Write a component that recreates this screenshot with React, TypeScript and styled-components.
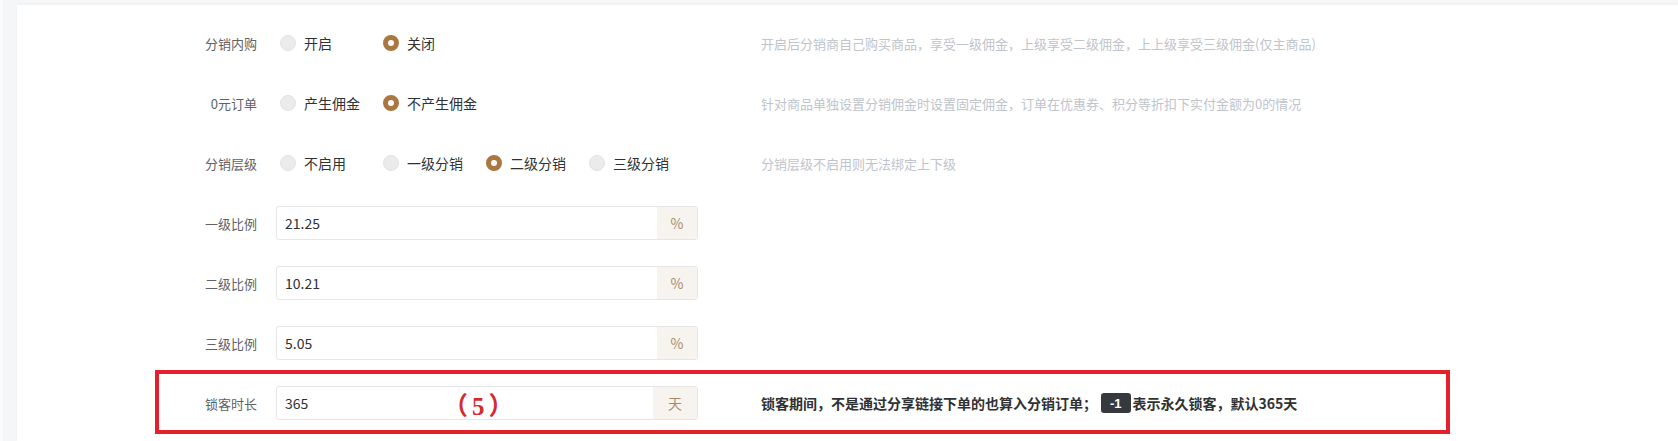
import styled, { createGlobalStyle } from "styled-components";

const GlobalStyle = createGlobalStyle`
  html, body {
    margin: 0;
    padding: 0;
    background: #ffffff;
  }
  body {
    font-family: "Noto Sans CJK SC", "Liberation Sans", sans-serif;
    -webkit-font-smoothing: antialiased;
  }
`;

type RadioOption = { label: string; checked?: boolean };

type FieldRow =
  | { kind: "radio"; label: string; options: RadioOption[]; tip: string }
  | { kind: "input"; label: string; value: string; unit: string };

const rows: FieldRow[] = [
  {
    kind: "radio",
    label: "分销内购",
    options: [{ label: "开启" }, { label: "关闭", checked: true }],
    tip: "开启后分销商自己购买商品，享受一级佣金，上级享受二级佣金，上上级享受三级佣金(仅主商品)",
  },
  {
    kind: "radio",
    label: "0元订单",
    options: [{ label: "产生佣金" }, { label: "不产生佣金", checked: true }],
    tip: "针对商品单独设置分销佣金时设置固定佣金，订单在优惠券、积分等折扣下实付金额为0的情况",
  },
  {
    kind: "radio",
    label: "分销层级",
    options: [
      { label: "不启用" },
      { label: "一级分销" },
      { label: "二级分销", checked: true },
      { label: "三级分销" },
    ],
    tip: "分销层级不启用则无法绑定上下级",
  },
  { kind: "input", label: "一级比例", value: "21.25", unit: "%" },
  { kind: "input", label: "二级比例", value: "10.21", unit: "%" },
  { kind: "input", label: "三级比例", value: "5.05", unit: "%" },
];

export default function App() {
  return (
    <>
      <GlobalStyle />
      <Page>
        <Card>
          {rows.map((row) => (
            <Row key={row.label}>
              <Label>{row.label}</Label>
              <Control>
                {row.kind === "radio" ? (
                  <RadioGroup>
                    {row.options.map((opt) => (
                      <RadioItem key={opt.label}>
                        <RadioDot $checked={!!opt.checked} />
                        <RadioText>{opt.label}</RadioText>
                      </RadioItem>
                    ))}
                  </RadioGroup>
                ) : (
                  <InputGroup>
                    <InputValue>{row.value}</InputValue>
                    <Addon>{row.unit}</Addon>
                  </InputGroup>
                )}
              </Control>
              {row.kind === "radio" && <Tip>{row.tip}</Tip>}
            </Row>
          ))}
          <Row>
            <Label>锁客时长</Label>
            <Control>
              <InputGroup>
                <InputValue>365</InputValue>
                <Addon $wide>天</Addon>
              </InputGroup>
            </Control>
            <StrongTip>
              锁客期间，不是通过分享链接下单的也算入分销订单；
              <Badge>-1</Badge>
              表示永久锁客，默认365天
            </StrongTip>
            <MarkBox />
            <MarkNumber>（5）</MarkNumber>
          </Row>
        </Card>
      </Page>
    </>
  );
}

const Page = styled.div`
  display: flex;
  height: 441px;
  box-sizing: border-box;
  padding-top: 5px;
  background: #f5f6f8;
  border-left: 3px solid #fbfbfc;
  padding-left: 14px;
  overflow: hidden;
`;

const Card = styled.div`
  flex: 1;
  background: #ffffff;
  padding-top: 8px;
  box-shadow: 0 -1px 4px rgba(0, 0, 0, 0.03);
`;

const Row = styled.div`
  position: relative;
  display: flex;
  align-items: center;
  height: 60px;
`;

const Label = styled.div`
  width: 240px;
  padding-right: 19px;
  text-align: right;
  font-size: 13px;
  color: #606266;
  flex-shrink: 0;
`;

const Control = styled.div`
  width: 485px;
  flex-shrink: 0;
  display: flex;
  align-items: center;
`;

const RadioGroup = styled.div`
  display: flex;
  align-items: center;
  padding-left: 4px;
`;

const RadioItem = styled.label`
  display: flex;
  align-items: center;
  width: 103px;
  gap: 8px;
`;

const RadioDot = styled.span<{ $checked: boolean }>`
  width: 16px;
  height: 16px;
  border-radius: 50%;
  box-sizing: border-box;
  flex-shrink: 0;
  background: ${({ $checked }) => ($checked ? "#ffffff" : "#ebebeb")};
  border: ${({ $checked }) =>
    $checked ? "5px solid #a9773f" : "1px solid #e2e2e2"};
`;

const RadioText = styled.span`
  font-size: 14px;
  color: #303133;
`;

const InputGroup = styled.div`
  display: flex;
  width: 422px;
  height: 34px;
  box-sizing: border-box;
  border: 1px solid #e6e6e6;
  border-radius: 3px;
  overflow: hidden;
`;

const InputValue = styled.div`
  flex: 1;
  display: flex;
  align-items: center;
  padding-left: 8px;
  font-size: 14px;
  color: #303133;
`;

const Addon = styled.div<{ $wide?: boolean }>`
  width: ${({ $wide }) => ($wide ? "44px" : "40px")};
  display: flex;
  align-items: center;
  justify-content: center;
  background: #f7f4f0;
  color: #a88a68;
  font-size: 14px;
`;

const Tip = styled.div`
  font-size: 13px;
  color: #c0c4cc;
  white-space: nowrap;
`;

const StrongTip = styled.div`
  display: flex;
  align-items: center;
  font-size: 14px;
  font-weight: bold;
  color: #303133;
  white-space: nowrap;
`;

const Badge = styled.span`
  display: inline-flex;
  align-items: center;
  justify-content: center;
  height: 20px;
  padding: 0 9px;
  margin: 0 2px 0 4px;
  background: #363a3e;
  color: #ffffff;
  border-radius: 3px;
  font-size: 13px;
  font-family: "Liberation Sans", sans-serif;
`;

const MarkBox = styled.div`
  position: absolute;
  left: 138px;
  top: -3px;
  width: 1295px;
  height: 64px;
  box-sizing: border-box;
  border: 4px solid #e5202d;
  pointer-events: none;
`;

const MarkNumber = styled.div`
  position: absolute;
  left: 426px;
  top: 20px;
  font-family: "Liberation Serif", "Noto Sans CJK SC", serif;
  font-size: 25px;
  font-weight: bold;
  letter-spacing: 4px;
  color: #d6282f;
  line-height: 28px;
`;
